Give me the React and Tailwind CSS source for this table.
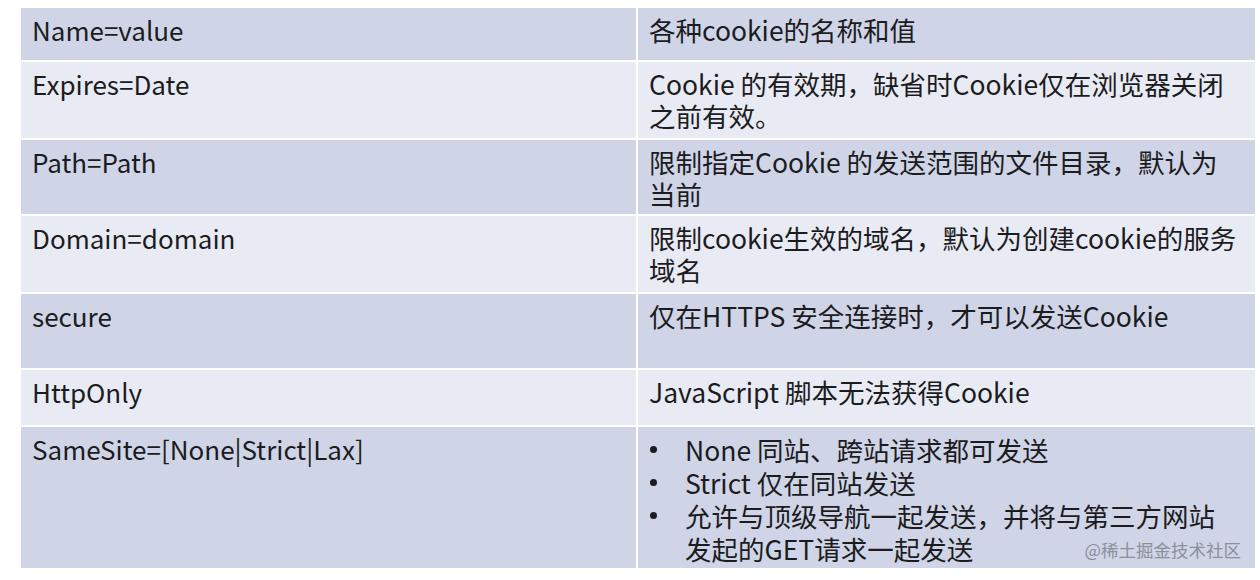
const rows = [
  { key: 'Name=value', h: 'h-[52px]', dark: true, lines: ['各种cookie的名称和值'] },
  { key: 'Expires=Date', h: 'h-[76px]', dark: false, lines: ['Cookie 的有效期，缺省时Cookie仅在浏览器关闭', '之前有效。'] },
  { key: 'Path=Path', h: 'h-[74px]', dark: true, lines: ['限制指定Cookie 的发送范围的文件目录，默认为', '当前'] },
  { key: 'Domain=domain', h: 'h-[76px]', dark: false, lines: ['限制cookie生效的域名，默认为创建cookie的服务', '域名'] },
  { key: 'secure', h: 'h-[74px]', dark: true, lines: ['仅在HTTPS 安全连接时，才可以发送Cookie'] },
  { key: 'HttpOnly', h: 'h-[55px]', dark: false, lines: ['JavaScript 脚本无法获得Cookie'] },
];

const Bullet = ({ children, dot = true }) => (
  <div className="flex">
    <span className="w-[34px] flex items-center">
      {dot && <span className="block w-[7px] h-[7px] rounded-full bg-[#1c1c1e] -ml-[1px]" />}
    </span>
    <span>{children}</span>
  </div>
);

const App = () => {
  return (
    <div
      className="w-[1260px] h-[580px] bg-white overflow-hidden pt-[8px] pl-[21px] text-[#1c1c1e]"
      style={{ fontFamily: '"Noto Sans CJK SC", "Noto Sans", sans-serif' }}
    >
      <div className="grid grid-cols-[615px_617px] gap-[2px] w-[1234px] bg-white">
        {rows.map((r) => {
          const bg = r.dark ? 'bg-[#cfd5e7]' : 'bg-[#e9ebf4]';
          return [
            <div key={r.key + 'a'} className={`${bg} ${r.h} pl-[11px] pt-[6px] text-[26px] leading-[32px] whitespace-nowrap`}>
              {r.key}
            </div>,
            <div key={r.key + 'b'} className={`${bg} ${r.h} pl-[11px] pt-[6px] text-[26.5px] leading-[32px] whitespace-nowrap`}>
              {r.lines.map((l) => (
                <div key={l}>{l}</div>
              ))}
            </div>,
          ];
        })}
        <div className="bg-[#cfd5e7] h-[141px] pl-[11px] pt-[6px] text-[26px] leading-[32px] whitespace-nowrap">
          SameSite=[None|Strict|Lax]
        </div>
        <div className="relative bg-[#cfd5e7] h-[141px] pl-[13px] pt-[6px] text-[26.5px] leading-[33px] whitespace-nowrap">
          <Bullet>None 同站、跨站请求都可发送</Bullet>
          <Bullet>Strict 仅在同站发送</Bullet>
          <Bullet>允许与顶级导航一起发送，并将与第三方网站</Bullet>
          <Bullet dot={false}>发起的GET请求一起发送</Bullet>
          <span className="absolute right-[14px] bottom-[8px] text-[17.5px] leading-[20px] text-[#8c8f9c]">
            @稀土掘金技术社区
          </span>
        </div>
      </div>
    </div>
  );
};

export default App;
